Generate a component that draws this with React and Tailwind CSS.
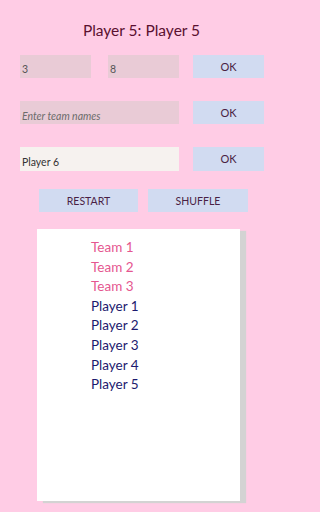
import React from "react";

export default function App() {
  const teams = ["Team 1", "Team 2", "Team 3"];
  const players = ["Player 1", "Player 2", "Player 3", "Player 4", "Player 5"];
  return (
    <div
      className="w-full min-w-[283px] h-screen min-h-[512px] bg-[#ffcce5] flex flex-col overflow-hidden"
      style={{ fontFamily: "Lato, 'Open Sans', sans-serif" }}
    >
      <h1 className="mt-[18px] w-[283px] h-[24px] text-center text-[15.5px] leading-[24px] text-[#5a1030]">
        Player 5: Player 5
      </h1>
      <div className="mt-[13px] flex pl-[20px] items-center">
        <div className="w-[71px] h-[23px] bg-[#e9cbd6] text-[10.5px] text-[#555] pl-[2px] pt-[7px] leading-[14px]">3</div>
        <div className="ml-[17px] w-[71px] h-[23px] bg-[#e9cbd6] text-[10.5px] text-[#555] pl-[2px] pt-[7px] leading-[14px]">8</div>
        <button className="ml-[14px] w-[71px] h-[23px] bg-[#d1dbf1] text-[11px] text-[#4a1f45] leading-[14px]">OK</button>
      </div>
      <div className="mt-[23px] flex pl-[20px] items-center">
        <div className="w-[159px] h-[23px] bg-[#e9cbd6] text-[10.5px] italic text-[#6b6b6b] pl-[2px] pt-[8px] leading-[14px]">Enter team names</div>
        <button className="ml-[14px] w-[71px] h-[23px] bg-[#d1dbf1] text-[11px] text-[#4a1f45] leading-[14px]">OK</button>
      </div>
      <div className="mt-[23px] flex pl-[20px] items-center">
        <div className="w-[159px] h-[24px] bg-[#f6f2ef] text-[10.5px] text-[#333] pl-[2px] pt-[8px] leading-[14px]">Player 6</div>
        <button className="ml-[14px] w-[71px] h-[24px] bg-[#d1dbf1] text-[11px] text-[#4a1f45] leading-[14px]">OK</button>
      </div>
      <div className="mt-[18px] flex pl-[39px] gap-[10px]">
        <button className="w-[99px] h-[23px] bg-[#d1dbf1] text-[10.5px] text-[#4a1f45] leading-[14px]">RESTART</button>
        <button className="w-[100px] h-[23px] bg-[#d1dbf1] text-[10.5px] text-[#4a1f45] leading-[14px]">SHUFFLE</button>
      </div>
      <div className="mt-[17px] ml-[37px] w-[203px] h-[272px] bg-white shadow-[6px_2px_1px_#d3d3d3] pt-[9px] pl-[54px]">
        {teams.map((t) => (
          <div key={t} className="text-[13.5px] leading-[19.6px] text-[#e5568f]">{t}</div>
        ))}
        {players.map((p) => (
          <div key={p} className="text-[13.5px] leading-[19.6px] text-[#1c1a6e]">{p}</div>
        ))}
      </div>
    </div>
  );
}
